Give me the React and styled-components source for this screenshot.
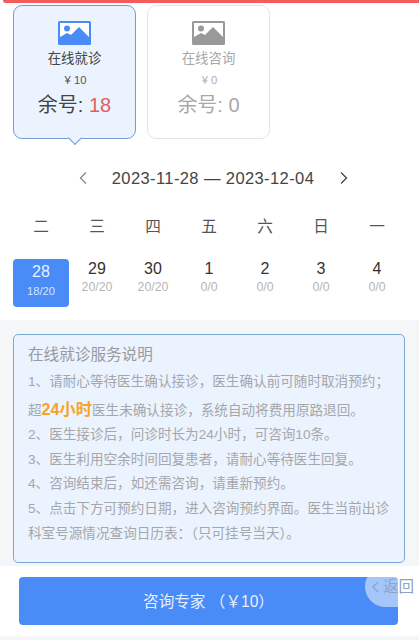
import styled, { createGlobalStyle } from 'styled-components';

const GlobalStyle = createGlobalStyle`
  html, body {
    margin: 0;
    padding: 0;
    background: #fff;
  }
  * {
    box-sizing: border-box;
  }
`;

const Page = styled.div`
  position: relative;
  width: 419px;
  height: 640px;
  overflow: hidden;
  background: #fff;
  color: #333;
  font-family: "Liberation Sans", "Noto Sans CJK SC", sans-serif;
`;

const TopBar = styled.div`
  height: 3px;
  margin-left: 3px;
  background: #f65b5b;
  border-radius: 0 0 0 4px;
`;

const Cards = styled.div`
  display: flex;
  gap: 11px;
  padding: 2px 0 0 13px;
  height: 148px;
`;

const Card = styled.div`
  position: relative;
  width: 123px;
  height: 134px;
  display: flex;
  flex-direction: column;
  align-items: center;
  padding-top: 15px;
  border-radius: 9px;
  border: 1px solid ${({ $active }) => ($active ? '#6f9fd6' : '#e4e4e8')};
  background: ${({ $active }) => ($active ? '#ebf3fe' : '#fff')};
  color: ${({ $active }) => ($active ? '#444' : '#a8a8a8')};

  ${({ $active }) =>
    $active &&
    `&::after {
      content: '';
      position: absolute;
      left: 56px;
      bottom: -5px;
      width: 9px;
      height: 9px;
      background: #ebf3fe;
      border-right: 1px solid #6f9fd6;
      border-bottom: 1px solid #6f9fd6;
      transform: rotate(45deg);
    }`}
`;

const CardTitle = styled.div`
  margin-top: 4px;
  font-size: 13.4px;
  line-height: 20px;
`;

const Price = styled.div`
  margin-top: 3px;
  padding-left: 2px;
  font-size: 11.2px;
  line-height: 16px;
  color: ${({ $active }) => ($active ? '#555' : '#b0b0b0')};
`;

const Remain = styled.div`
  margin-top: 3px;
  font-size: 20px;
  line-height: 28px;
`;

const RemainCount = styled.span`
  color: ${({ $active }) => ($active ? '#e35d5d' : '#a8a8a8')};
`;

const WeekNav = styled.div`
  display: flex;
  align-items: center;
  justify-content: center;
  height: 24px;
  margin-top: 15px;
  padding-left: 8px;
  font-size: 16.5px;
  letter-spacing: 0.4px;
  color: #444;
`;

const NavRange = styled.span`
  margin: 0 25px 0 24px;
  white-space: nowrap;
`;

const WeekGrid = styled.div`
  display: grid;
  grid-template-columns: repeat(7, 56px);
  padding: 0 13px;
`;

const WeekDay = styled.div`
  height: 24px;
  margin-top: 25px;
  margin-bottom: 20px;
  text-align: center;
  font-size: 15.6px;
  line-height: 24px;
  color: #555;
`;

const Day = styled.div`
  height: 48px;
  padding-top: ${({ $active }) => ($active ? '3px' : '0')};
  text-align: center;
  border-radius: 4px;
  background: ${({ $active }) => ($active ? '#4a8cf7' : 'transparent')};
  color: ${({ $active }) => ($active ? '#eaf2fe' : '#333')};
`;

const DayNum = styled.div`
  font-size: 16px;
  line-height: 20px;
`;

const DayCount = styled.div`
  margin-top: ${({ $active }) => ($active ? '1px' : '0')};
  font-size: ${({ $active }) => ($active ? '11.2px' : '12.3px')};
  line-height: 16px;
  color: ${({ $active }) => ($active ? '#d5e4fd' : '#b5b5b5')};
`;

const InfoSection = styled.div`
  margin-top: 13px;
  padding: 14px 14px 3px 13px;
  background: #f5f6f8;
`;

const InfoBox = styled.div`
  height: 229px;
  padding: 8px 0 0 14px;
  background: #ebf3fe;
  border: 1px solid #7aa9d8;
  border-radius: 5px;
  color: #a6a7aa;
  font-size: 13.6px;
  line-height: 25px;
  white-space: nowrap;
`;

const InfoTitle = styled.div`
  height: 26px;
  font-size: 15.6px;
  line-height: 24px;
  color: #999a9e;
`;

const InfoLine = styled.div`
  height: ${({ $tall }) => ($tall ? '28px' : '24.8px')};
  line-height: ${({ $tall }) => ($tall ? '31px' : '25px')};
`;

const Strong = styled.strong`
  font-size: 16.2px;
  color: #f7a325;
`;

const Footer = styled.div`
  height: 70px;
  padding: 11px 21px 0 19px;
`;

const SubmitButton = styled.button`
  display: block;
  width: 100%;
  height: 48px;
  padding: 0 0 2px;
  border: 0;
  border-radius: 4px;
  background: #4a8cf7;
  color: #e6effe;
  font: inherit;
  font-size: 15.6px;
`;

const BottomBand = styled.div`
  height: 4px;
  background: #f5f6f8;
`;

const BackButton = styled.div`
  position: absolute;
  right: 0;
  top: 566px;
  width: 54px;
  height: 41px;
  padding-left: 6px;
  display: flex;
  align-items: center;
  gap: 3px;
  border-radius: 24px 0 0 24px;
  background: rgba(255, 255, 255, 0.5);
  color: #8fa3c4;
  font-size: 15.6px;
  line-height: 38px;
  white-space: nowrap;
`;

const days = [
  { num: '28', count: '18/20', active: true },
  { num: '29', count: '20/20' },
  { num: '30', count: '20/20' },
  { num: '1', count: '0/0' },
  { num: '2', count: '0/0' },
  { num: '3', count: '0/0' },
  { num: '4', count: '0/0' },
];

function ImageIcon({ color }) {
  return (
    <svg width="33" height="24" viewBox="0 0 33 24">
      <rect x="0" y="0" width="33" height="24" rx="1.5" fill={color} />
      <rect x="2" y="2" width="29" height="17" fill="#fff" />
      <circle cx="9" cy="7.5" r="3" fill={color} />
      <path d="M2 20 L2 16 L9 12 L13 14 L21 6 L31 16 L31 20 Z" fill={color} />
    </svg>
  );
}

function Chevron({ left }) {
  return (
    <svg width="10" height="14" viewBox="0 0 10 14" fill="none">
      <path
        d={left ? 'M8 1.5 L2.5 7 L8 12.5' : 'M2 1.5 L7.5 7 L2 12.5'}
        stroke={left ? '#888' : '#444'}
        strokeWidth="1.3"
      />
    </svg>
  );
}

function ServiceCard({ active, title, price, remain }) {
  return (
    <Card $active={active}>
      <ImageIcon color={active ? '#4a8cf7' : '#999'} />
      <CardTitle>{title}</CardTitle>
      <Price $active={active}>¥ {price}</Price>
      <Remain>
        余号: <RemainCount $active={active}>{remain}</RemainCount>
      </Remain>
    </Card>
  );
}

export default function App() {
  return (
    <Page>
      <GlobalStyle />
      <TopBar />
      <Cards>
        <ServiceCard active title="在线就诊" price="10" remain="18" />
        <ServiceCard title="在线咨询" price="0" remain="0" />
      </Cards>
      <WeekNav>
        <Chevron left />
        <NavRange>2023-11-28 — 2023-12-04</NavRange>
        <Chevron />
      </WeekNav>
      <WeekGrid>
        {['二', '三', '四', '五', '六', '日', '一'].map((d) => (
          <WeekDay key={d}>{d}</WeekDay>
        ))}
        {days.map((d) => (
          <Day key={d.num} $active={d.active}>
            <DayNum>{d.num}</DayNum>
            <DayCount $active={d.active}>{d.count}</DayCount>
          </Day>
        ))}
      </WeekGrid>
      <InfoSection>
        <InfoBox>
          <InfoTitle>在线就诊服务说明</InfoTitle>
          <InfoLine>1、请耐心等待医生确认接诊，医生确认前可随时取消预约；</InfoLine>
          <InfoLine $tall>
            超<Strong>24小时</Strong>医生未确认接诊，系统自动将费用原路退回。
          </InfoLine>
          <InfoLine>2、医生接诊后，问诊时长为24小时，可咨询10条。</InfoLine>
          <InfoLine>3、医生利用空余时间回复患者，请耐心等待医生回复。</InfoLine>
          <InfoLine>4、咨询结束后，如还需咨询，请重新预约。</InfoLine>
          <InfoLine>5、点击下方可预约日期，进入咨询预约界面。医生当前出诊</InfoLine>
          <InfoLine>科室号源情况查询日历表：（只可挂号当天）。</InfoLine>
        </InfoBox>
      </InfoSection>
      <Footer>
        <SubmitButton>咨询专家 （￥10）</SubmitButton>
      </Footer>
      <BottomBand />
      <BackButton>
        <svg width="9" height="12" viewBox="0 0 9 12" fill="none">
          <path d="M7 1 L2 6 L7 11" stroke="#8fa3c4" strokeWidth="1.3" />
        </svg>
        返回
      </BackButton>
    </Page>
  );
}
